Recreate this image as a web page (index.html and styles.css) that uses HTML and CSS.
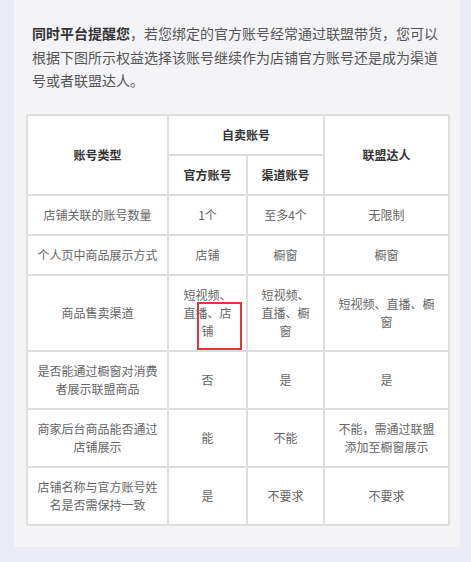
FILE: index.html
```html
<!DOCTYPE html>
<html lang="zh-CN">
<head>
    <meta charset="UTF-8">
    <meta name="viewport" content="width=device-width, initial-scale=1.0">
    <title>账号类型权益对比</title>
    <link rel="stylesheet" href="styles.css">
</head>
<body>

    <div class="card">
        <!-- Notice -->
        <p class="notice"><strong>同时平台提醒您</strong>，若您绑定的官方账号经常通过联盟带货，您可以根据下图所示权益选择该账号继续作为店铺官方账号还是成为渠道号或者联盟达人。</p>

        <!-- Comparison table -->
        <table class="compare">
            <colgroup>
                <col class="c1">
                <col class="c2">
                <col class="c3">
                <col class="c4">
            </colgroup>
            <thead>
                <tr>
                    <th rowspan="2">账号类型</th>
                    <th colspan="2">自卖账号</th>
                    <th rowspan="2">联盟达人</th>
                </tr>
                <tr>
                    <th>官方账号</th>
                    <th>渠道账号</th>
                </tr>
            </thead>
            <tbody>
                <tr>
                    <td>店铺关联的账号数量</td>
                    <td>1个</td>
                    <td>至多4个</td>
                    <td>无限制</td>
                </tr>
                <tr>
                    <td>个人页中商品展示方式</td>
                    <td>店铺</td>
                    <td>橱窗</td>
                    <td>橱窗</td>
                </tr>
                <tr>
                    <td>商品售卖渠道</td>
                    <td class="narrow marked">短视频、直播、店铺<span class="highlight"></span></td>
                    <td class="narrow">短视频、直播、橱窗</td>
                    <td>短视频、直播、橱窗</td>
                </tr>
                <tr>
                    <td>是否能通过橱窗对消费者展示联盟商品</td>
                    <td>否</td>
                    <td>是</td>
                    <td>是</td>
                </tr>
                <tr>
                    <td>商家后台商品能否通过店铺展示</td>
                    <td>能</td>
                    <td>不能</td>
                    <td>不能，需通过联盟添加至橱窗展示</td>
                </tr>
                <tr>
                    <td>店铺名称与官方账号姓名是否需保持一致</td>
                    <td>是</td>
                    <td>不要求</td>
                    <td>不要求</td>
                </tr>
            </tbody>
        </table>
    </div>

</body>
</html>
```

FILE: styles.css
```css
body { margin: 0; background: #ebebf5; font-family: "Noto Sans CJK SC", "Noto Sans", sans-serif; }
.card { width: 422px; margin-left: 14px; padding: 22px 12px 21px; background: #f4f4f7; }
.notice { margin: 0 0 21px; padding: 0 6px; font-size: 14px; line-height: 23.5px; color: #555; }
.notice strong { color: #333; font-weight: bold; }

.compare { width: 422px; table-layout: fixed; border-collapse: collapse; background: #fff; }
.compare .c1 { width: 141px; }
.compare .c2 { width: 79px; }
.compare .c3 { width: 77px; }
.compare .c4 { width: 125px; }
.compare th, .compare td { border: 2px solid #dedede; padding: 10px 8px; font-size: 12px; line-height: 18px; text-align: center; }
.compare th { color: #333; font-weight: bold; }
.compare td { color: #666; }
.compare td.narrow { padding: 10px 10px; }
.compare td.marked { position: relative; }
.highlight { position: absolute; left: 28px; top: 26px; width: 41px; height: 44px; border: 2px solid #e8323c; }
```
